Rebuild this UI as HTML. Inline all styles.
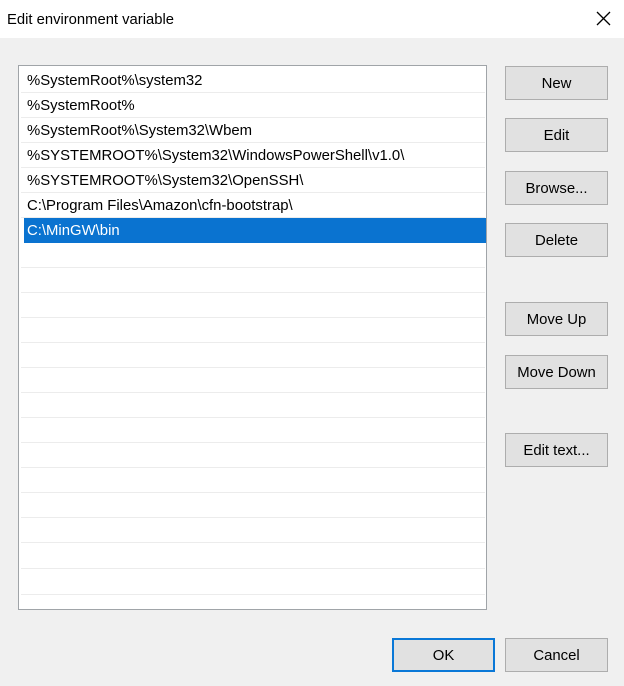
<!DOCTYPE html>
<html><head><style>
body{margin:0;width:624px;height:686px;background:#f0f0f0;font-family:"Liberation Sans",sans-serif;position:relative;overflow:hidden;color:#000}
.title{position:absolute;left:0;top:0;width:624px;height:38px;background:#fff}
.title span{position:absolute;left:7px;top:12px;font-size:14.8px}
.list{position:absolute;left:18px;top:65px;width:467px;height:543px;background:#fff;border:1px solid #a0a4a8;overflow:hidden}
.row{position:absolute;left:2px;width:464px;height:24px;border-bottom:1px solid #ececec;font-size:14.9px;line-height:27px;text-indent:6px;white-space:nowrap}
.sel{background:#0a73d0;color:#fff;left:5px;width:462px;text-indent:3px;border-bottom-color:#0a73d0}
.btn{position:absolute;left:505px;width:101px;height:32px;background:#e1e1e1;border:1px solid #adadad;font-size:14.9px;text-align:center;line-height:34px}
.ok{left:392px;border:2px solid #0a78d7;width:99px;height:30px;line-height:32px}
</style></head><body>
<div class="title"><span>Edit environment variable</span>
<svg style="position:absolute;left:596px;top:11px" width="15" height="15"><path d="M1 1L14 14M14 1L1 14" stroke="#000" stroke-width="1.3"/></svg></div>
<div class="list">
<div class="row" style="top:2px">%SystemRoot%\system32</div>
<div class="row" style="top:27px">%SystemRoot%</div>
<div class="row" style="top:52px">%SystemRoot%\System32\Wbem</div>
<div class="row" style="top:77px">%SYSTEMROOT%\System32\WindowsPowerShell\v1.0\</div>
<div class="row" style="top:102px">%SYSTEMROOT%\System32\OpenSSH\</div>
<div class="row" style="top:127px">C:\Program Files\Amazon\cfn-bootstrap\</div>
<div class="row sel" style="top:152px">C:\MinGW\bin</div>
<div class="row" style="top:177px"></div><div class="row" style="top:202px"></div>
<div class="row" style="top:227px"></div><div class="row" style="top:252px"></div>
<div class="row" style="top:277px"></div><div class="row" style="top:302px"></div>
<div class="row" style="top:327px"></div><div class="row" style="top:352px"></div>
<div class="row" style="top:377px"></div><div class="row" style="top:402px"></div>
<div class="row" style="top:427px"></div><div class="row" style="top:452px"></div>
<div class="row" style="top:478px"></div><div class="row" style="top:504px"></div>
</div>
<div class="btn" style="top:66px">New</div>
<div class="btn" style="top:118px">Edit</div>
<div class="btn" style="top:171px">Browse...</div>
<div class="btn" style="top:223px">Delete</div>
<div class="btn" style="top:302px">Move Up</div>
<div class="btn" style="top:355px">Move Down</div>
<div class="btn" style="top:433px">Edit text...</div>
<div class="btn ok" style="top:638px">OK</div>
<div class="btn" style="top:638px">Cancel</div>
</body></html>
